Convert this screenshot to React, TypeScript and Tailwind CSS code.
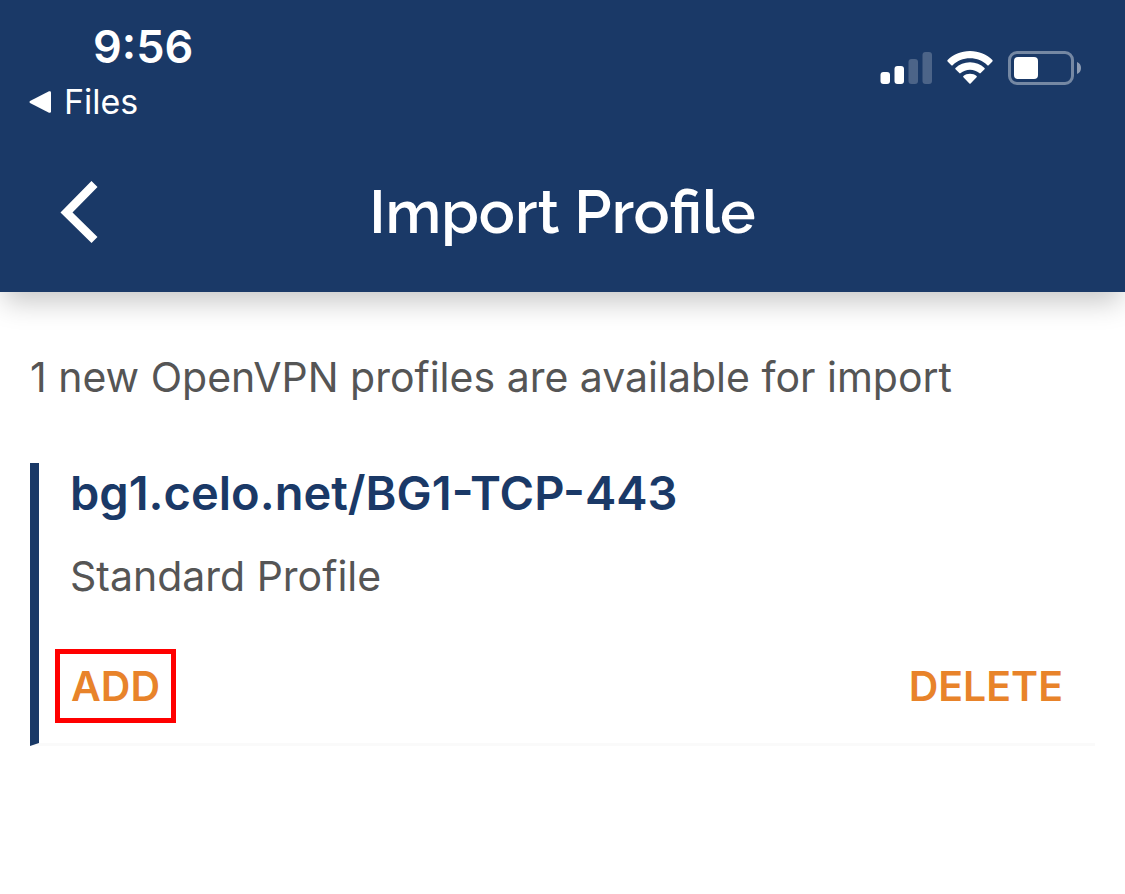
const SignalIcon = () => (
  <svg width="52" height="34" viewBox="0 0 52 34" fill="#fff" aria-hidden="true">
    <rect x="0.500" y="21" width="9.500" height="12" rx="3" />
    <rect x="14.500" y="15" width="9.500" height="18" rx="3" />
    <rect x="28.500" y="8" width="9.500" height="25" rx="3" opacity="0.22" />
    <rect x="42.500" y="1" width="9.500" height="32" rx="3" opacity="0.22" />
  </svg>
);

const WifiIcon = () => (
  <svg width="46" height="34" viewBox="0 0 46 34" fill="#fff" aria-hidden="true">
    <path d="M23 0C14 0 6 3.500 0.600 9Q0 9.700 0.600 10.400L4.300 14.200Q5 14.800 5.700 14.200C10.200 9.900 16.200 7.300 23 7.300S35.800 9.900 40.300 14.200Q41 14.800 41.700 14.200L45.400 10.400Q46 9.700 45.400 9C40 3.500 32 0 23 0Z" />
    <path d="M23 11.300C17.400 11.300 12.300 13.400 8.500 16.900Q7.800 17.600 8.500 18.300L12.300 22.100Q13 22.700 13.700 22.100C16.200 20 19.400 18.700 23 18.700S29.800 20 32.300 22.100Q33 22.700 33.700 22.100L37.500 18.300Q38.200 17.600 37.500 16.900C33.700 13.400 28.600 11.300 23 11.300Z" />
    <path d="M23 22.800C20.400 22.800 18.200 23.600 16.400 25.100Q15.800 25.700 16.400 26.300L22.400 32.500Q23 33 23.600 32.500L29.600 26.300Q30.200 25.700 29.600 25.100C27.800 23.600 25.600 22.800 23 22.800Z" />
  </svg>
);

const BatteryIcon = () => (
  <svg width="73" height="34" viewBox="0 0 73 34" aria-hidden="true">
    <rect x="1.500" y="1.500" width="63" height="31" rx="7.500" fill="none" stroke="#fff" strokeOpacity="0.4" strokeWidth="3" />
    <rect x="6" y="6" width="24" height="22" rx="4" fill="#fff" />
    <path d="M69 11c2.600 1 4 3.300 4 6s-1.400 5-4 6z" fill="#fff" opacity="0.5" />
  </svg>
);

const StatusBar = () => (
  <div className="flex items-start justify-between pt-5 pr-11 pl-[29px]">
    <div>
      <div className="pl-16 text-[45px] leading-[54px] font-semibold">9:56</div>
      <a href="#files" className="flex items-center gap-[13px] text-[34px] leading-14">
        <svg width="22" height="22" viewBox="0 0 22 22" fill="#fff" aria-hidden="true">
          <path d="M1 10L20 0.300Q22 -0.300 22 1.600V20.400Q22 22.300 20 21.700L1 12Q0 11 1 10Z" />
        </svg>
        Files
      </a>
    </div>
    <div className="flex items-center gap-[15px] pt-[31px]">
      <SignalIcon />
      <WifiIcon />
      <BatteryIcon />
    </div>
  </div>
);

const App = () => {
  return (
    <div className="min-h-screen bg-white font-['Inter',sans-serif]">
      <header className="bg-[#1a3967] text-white shadow-[0_14px_26px_-4px_rgba(0,0,0,0.22)]">
        <StatusBar />
        <div className="grid grid-cols-[100px_1fr_100px] items-center pt-[18px] pb-4">
          <button type="button" aria-label="Back" className="flex justify-end">
            <svg width="40" height="64" viewBox="0 0 40 64" fill="none" stroke="#fff" strokeWidth="8.500" aria-hidden="true">
              <path d="M34.500 4L6.500 32.500L34.500 60" />
            </svg>
          </button>
          <h1 className="text-center font-['Raleway','Lato',sans-serif] text-[60px] leading-32 font-semibold">
            Import Profile
          </h1>
        </div>
      </header>

      <main className="px-[30px] pt-[55px]">
        <p className="text-[41px] leading-[60px] text-[#555]">
          1 new OpenVPN profiles are available for import
        </p>

        <section className="mt-14 border-b-3 border-l-9 border-b-[#fafafa] border-l-[#1a3967]">
          <h2 className="px-[31px] text-[47px] leading-[60px] font-semibold text-[#1a3967]">
            bg1.celo.net/BG1-TCP-443
          </h2>
          <p className="px-[31px] pt-[23px] text-[41px] leading-[60px] text-[#555]">Standard Profile</p>
          <div className="flex items-center justify-between px-4 pt-[43px] pb-5 text-[41px] font-semibold text-[#e8832a]">
            <button type="button" className="border-5 border-[#f00] px-[11px] leading-16">
              ADD
            </button>
            <button type="button" className="px-4 leading-16">
              DELETE
            </button>
          </div>
        </section>
      </main>
    </div>
  );
};

export default App;
